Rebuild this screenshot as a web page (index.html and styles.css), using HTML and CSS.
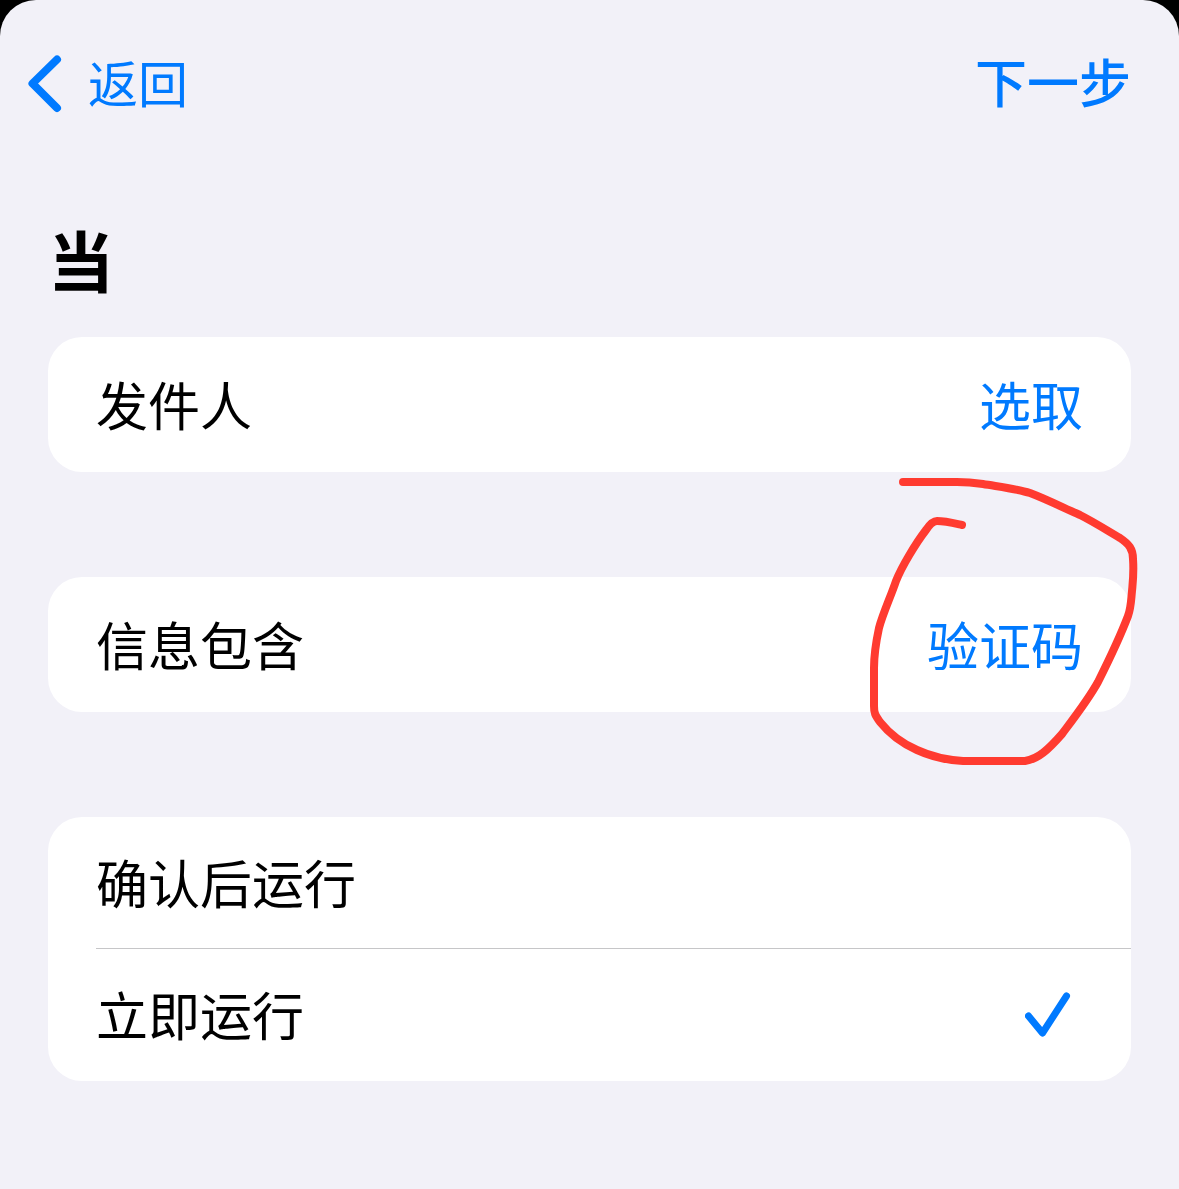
FILE: index.html
```
<!DOCTYPE html>
<html lang="zh-CN">
<head>
  <meta charset="UTF-8">
  <meta name="viewport" content="width=device-width, initial-scale=1.0">
  <title>信息自动化</title>
  <link rel="stylesheet" href="styles.css">
</head>
<body>
  <div class="sheet">
    <header class="navbar">
      <button type="button" class="nav-btn back">
        <svg class="chevron" viewBox="0 0 34 58" aria-hidden="true">
          <path d="M29 4.500L4.500 28.500L29 53"/>
        </svg>
        返回
      </button>
      <button type="button" class="nav-btn next">下一步</button>
    </header>

    <main class="content">
      <h1>当</h1>

      <section class="card">
        <div class="row">
          <span>发件人</span>
          <button type="button" class="value">选取</button>
        </div>
      </section>

      <section class="card">
        <div class="row">
          <span>信息包含</span>
          <button type="button" class="value">验证码</button>
        </div>
        <!-- hand-drawn circle -->
        <svg class="scribble" viewBox="0 0 270 295" aria-hidden="true">
          <path d="M33 7H87C99 7 106 8 113 9C131 12 148 14 160 18C176 24 194 33 210 40C224 47 238 56 250 63C259 69 263 74 263 84C264 98 263 105 262 116C261 126 261 133 258 141C250 162 238 187 228 207C218 225 204 243 192 259C178 275 168 284 155 286H123C111 286 101 286 93 286C76 285 60 281 47 275C31 268 18 257 10 247C5 240 4 238 4 231V193C4 180 6 167 9 153C13 138 21 121 26 106C32 91 46 68 56 55C60 49 63 46 67 46C75 46 83 48 92 50"/>
        </svg>
      </section>

      <section class="card">
        <label class="row option">
          <span>确认后运行</span>
          <input type="radio" name="run">
          <svg class="check" viewBox="0 0 46 46" aria-hidden="true"><path d="M3.500 25L17.500 42L41.500 5"/></svg>
        </label>
        <label class="row option">
          <span>立即运行</span>
          <input type="radio" name="run" checked>
          <svg class="check" viewBox="0 0 46 46" aria-hidden="true"><path d="M3.500 25L17.500 42L41.500 5"/></svg>
        </label>
      </section>
    </main>
  </div>
</body>
</html>
```

FILE: styles.css
```
* {
  box-sizing: border-box;
}

body {
  margin: 0;
  background: #000;
  color: #000;
  font-family: "Noto Sans CJK SC", sans-serif;
  font-size: 52px;
  line-height: 76px;
}

button {
  padding: 0;
  border: 0;
  background: none;
  color: #007aff;
  font: inherit;
  cursor: pointer;
}

svg {
  fill: none;
  stroke: #007aff;
  stroke-linecap: round;
  stroke-linejoin: round;
}

.sheet {
  min-height: 100vh;
  background: #f2f1f8;
  border-radius: 36px 36px 0 0;
}

.navbar {
  display: flex;
  justify-content: space-between;
  align-items: center;
  height: 162px;
  padding: 0 48px 0 28px;
}

.nav-btn {
  display: flex;
  align-items: center;
  gap: 26px;
}

.back {
  font-size: 50px;
}

.next {
  font-weight: 500;
}

.chevron {
  width: 34px;
  height: 58px;
  margin-top: 6px;
  stroke-width: 8;
}

.content {
  padding: 54px 48px 108px;
}

h1 {
  margin: 0 0 36px;
  font-size: 66px;
  font-weight: 700;
  line-height: 85px;
}

.card {
  position: relative;
  background: #fff;
  border-radius: 34px;
}

.card + .card {
  margin-top: 105px;
}

.row {
  display: flex;
  justify-content: space-between;
  align-items: center;
  height: 135px;
  margin-left: 48px;
  padding: 0 48px 2px 0;
}

.option {
  height: 131px;
  cursor: pointer;
}

.option + .option {
  height: 133px;
  border-top: 1px solid #c6c6c8;
}

.option input {
  position: absolute;
  opacity: 0;
}

.check {
  width: 46px;
  height: 46px;
  margin-right: 12px;
  stroke-width: 7;
  visibility: hidden;
}

input:checked + .check {
  visibility: visible;
}

.scribble {
  position: absolute;
  top: -102px;
  right: -9px;
  width: 270px;
  height: 295px;
  stroke: #ff3b30;
  stroke-width: 8;
  pointer-events: none;
}
```
